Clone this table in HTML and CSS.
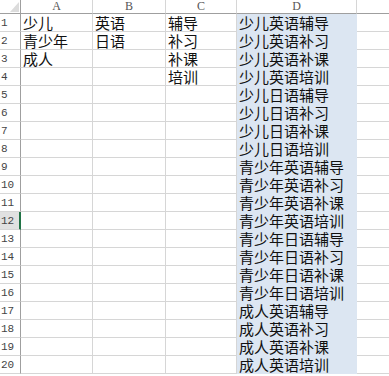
FILE: index.html
```html
<!DOCTYPE html>
<html lang="zh-CN">
<head>
  <meta charset="UTF-8" />
  <meta name="viewport" content="width=device-width, initial-scale=1" />
  <title>Sheet1</title>
  <link rel="stylesheet" href="styles.css">
</head>
<body>

<div class="sheet">
  <!-- 表头 -->
  <div class="corner"><svg width="9" height="10" viewBox="0 0 9 10"><polygon points="9,0 9,10 0,10" fill="#dcdcdc"/></svg></div>
  <div class="col-head">A</div>
  <div class="col-head">B</div>
  <div class="col-head">C</div>
  <div class="col-head">D</div>
  <div class="col-head"></div>

  <div class="row-head">1</div><div class="cell">少儿</div><div class="cell">英语</div><div class="cell">辅导</div><div class="cell sel">少儿英语辅导</div><div class="cell"></div>
  <div class="row-head">2</div><div class="cell">青少年</div><div class="cell">日语</div><div class="cell">补习</div><div class="cell sel">少儿英语补习</div><div class="cell"></div>
  <div class="row-head">3</div><div class="cell">成人</div><div class="cell"></div><div class="cell">补课</div><div class="cell sel">少儿英语补课</div><div class="cell"></div>
  <div class="row-head">4</div><div class="cell"></div><div class="cell"></div><div class="cell">培训</div><div class="cell sel">少儿英语培训</div><div class="cell"></div>
  <div class="row-head">5</div><div class="cell"></div><div class="cell"></div><div class="cell"></div><div class="cell sel">少儿日语辅导</div><div class="cell"></div>
  <div class="row-head">6</div><div class="cell"></div><div class="cell"></div><div class="cell"></div><div class="cell sel">少儿日语补习</div><div class="cell"></div>
  <div class="row-head">7</div><div class="cell"></div><div class="cell"></div><div class="cell"></div><div class="cell sel">少儿日语补课</div><div class="cell"></div>
  <div class="row-head">8</div><div class="cell"></div><div class="cell"></div><div class="cell"></div><div class="cell sel">少儿日语培训</div><div class="cell"></div>
  <div class="row-head">9</div><div class="cell"></div><div class="cell"></div><div class="cell"></div><div class="cell sel">青少年英语辅导</div><div class="cell"></div>
  <div class="row-head">10</div><div class="cell"></div><div class="cell"></div><div class="cell"></div><div class="cell sel">青少年英语补习</div><div class="cell"></div>
  <div class="row-head">11</div><div class="cell"></div><div class="cell"></div><div class="cell"></div><div class="cell sel">青少年英语补课</div><div class="cell"></div>
  <div class="row-head active">12</div><div class="cell"></div><div class="cell"></div><div class="cell"></div><div class="cell sel">青少年英语培训</div><div class="cell"></div>
  <div class="row-head">13</div><div class="cell"></div><div class="cell"></div><div class="cell"></div><div class="cell sel">青少年日语辅导</div><div class="cell"></div>
  <div class="row-head">14</div><div class="cell"></div><div class="cell"></div><div class="cell"></div><div class="cell sel">青少年日语补习</div><div class="cell"></div>
  <div class="row-head">15</div><div class="cell"></div><div class="cell"></div><div class="cell"></div><div class="cell sel">青少年日语补课</div><div class="cell"></div>
  <div class="row-head">16</div><div class="cell"></div><div class="cell"></div><div class="cell"></div><div class="cell sel">青少年日语培训</div><div class="cell"></div>
  <div class="row-head">17</div><div class="cell"></div><div class="cell"></div><div class="cell"></div><div class="cell sel">成人英语辅导</div><div class="cell"></div>
  <div class="row-head">18</div><div class="cell"></div><div class="cell"></div><div class="cell"></div><div class="cell sel">成人英语补习</div><div class="cell"></div>
  <div class="row-head">19</div><div class="cell"></div><div class="cell"></div><div class="cell"></div><div class="cell sel">成人英语补课</div><div class="cell"></div>
  <div class="row-head">20</div><div class="cell"></div><div class="cell"></div><div class="cell"></div><div class="cell sel">成人英语培训</div><div class="cell"></div>
</div>

</body>
</html>
```

FILE: styles.css
```css
*, *::before, *::after { margin: 0; padding: 0; box-sizing: border-box; }
body {
  background: #fff;
  overflow: hidden;
}
.sheet {
  display: grid;
  grid-template-columns: 21px 72px 73px 71px 120px 40px;
  grid-template-rows: 14px repeat(20, 18px);
}

/* 左上角 */
.corner {
  border-right: 1px solid #9f9f9f;
  border-bottom: 1px solid #9f9f9f;
  display: flex;
  align-items: flex-end;
  justify-content: flex-end;
  padding: 0 1px 1px 0;
}
.corner svg { display: block; }

.col-head {
  border-right: 1px solid #d6d6d6;
  border-bottom: 1px solid #9f9f9f;
  font-family: "Liberation Serif", serif;
  font-size: 12px;
  line-height: 13px;
  color: #555;
  text-align: center;
}

.row-head {
  border-right: 1px solid #9f9f9f;
  border-bottom: 1px solid #d6d6d6;
  font-family: "Liberation Mono", monospace;
  font-size: 11px;
  line-height: 18px;
  color: #444;
  padding-left: 1px;
}
.row-head.active {
  background: #e1e1e1;
  border-right: 2px solid #217346;
}

.cell {
  border-right: 1px solid #d6d6d6;
  border-bottom: 1px solid #d6d6d6;
  font-family: "Noto Sans CJK SC", sans-serif;
  font-size: 15px;
  line-height: 17px;
  color: #111;
  padding-left: 2px;
  white-space: nowrap;
}
.cell.sel {
  background: #dce6f2;
  border-color: #dce6f2;
}
```
